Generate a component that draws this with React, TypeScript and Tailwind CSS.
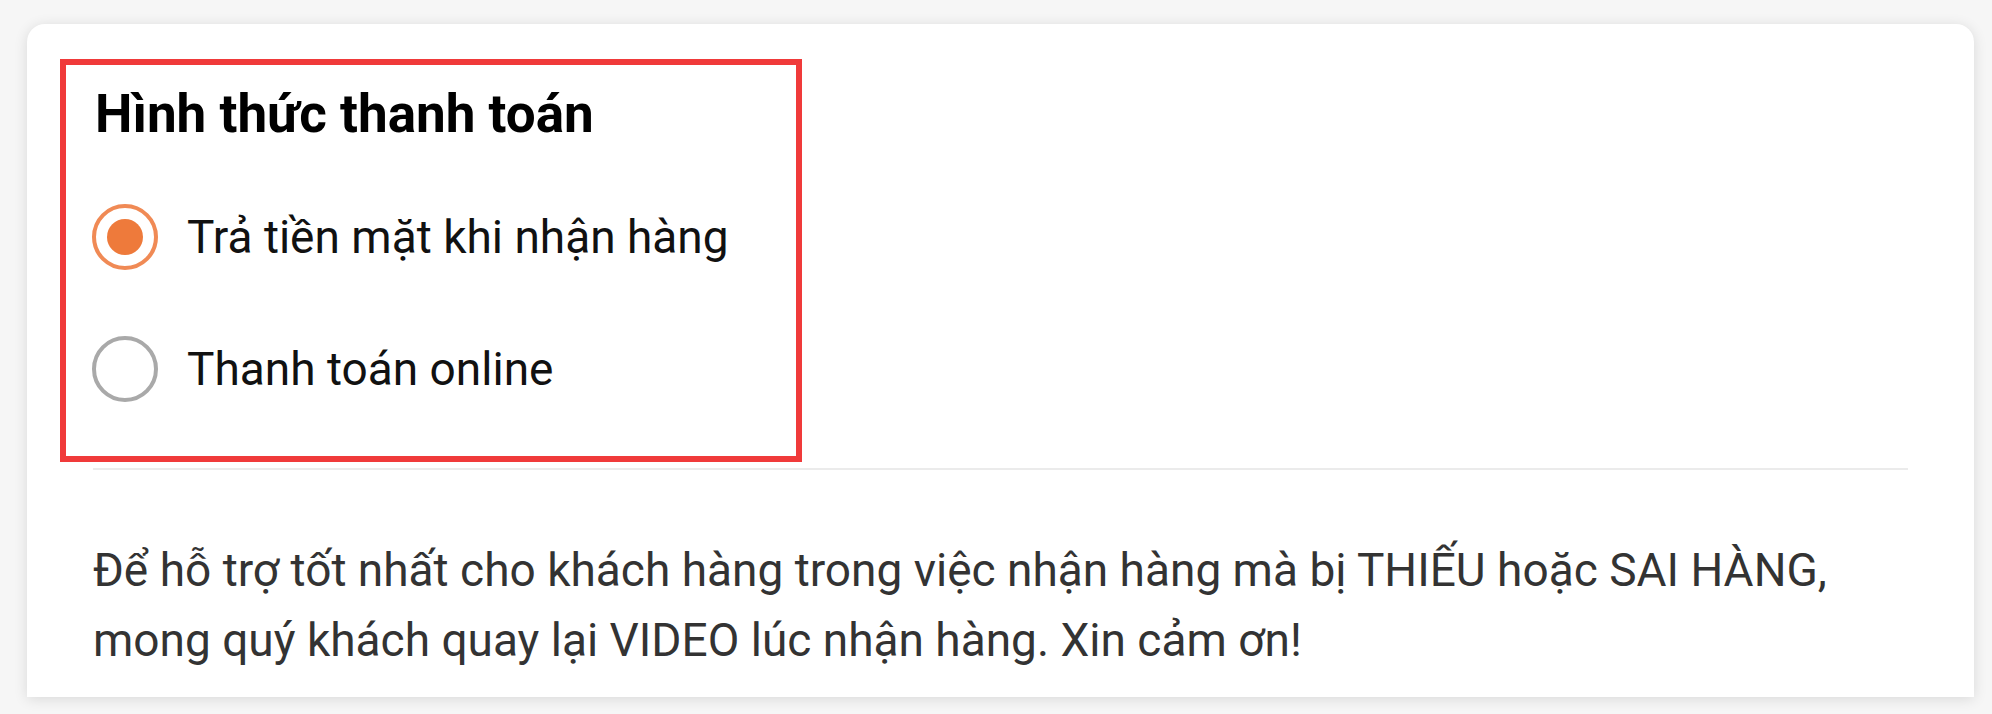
import React from "react";

function Radio({ checked }: { checked?: boolean }) {
  if (checked) {
    return (
      <span className="flex h-[66px] w-[66px] shrink-0 items-center justify-center rounded-full border-[4px] border-[#f08a55] bg-white">
        <span className="h-[36px] w-[36px] rounded-full bg-[#ee7a3b]" />
      </span>
    );
  }
  return <span className="h-[66px] w-[66px] shrink-0 rounded-full border-[4px] border-[#a9a9a9] bg-white" />;
}

export default function App() {
  const options = [
    { label: "Trả tiền mặt khi nhận hàng", checked: true },
    { label: "Thanh toán online", checked: false },
  ];

  return (
    <div className="h-[714px] w-full overflow-hidden bg-[#f6f6f6] pl-[27px] pr-[18px] pt-[24px] font-['Roboto',sans-serif]">
      <div className="h-[673px] rounded-t-[18px] bg-white pl-[33px] pr-[66px] pt-[35px] shadow-[0_2px_14px_rgba(0,0,0,0.12)]">
        <div className="w-[742px] border-[6px] border-[#f03a3a] pb-[54px] pl-[26px] pt-[19px]">
          <h2 className="ml-[3px] text-[53px] leading-[60px] font-bold text-black">Hình thức thanh toán</h2>
          <div className="mt-[60px] flex flex-col gap-[66px]">
            {options.map((o) => (
              <label key={o.label} className="flex items-center gap-[29px]">
                <Radio checked={o.checked} />
                <span className="text-[46px] leading-[56px] text-[#111]">{o.label}</span>
              </label>
            ))}
          </div>
        </div>
        <div className="ml-[33px] mt-[6px] h-[2px] bg-[#ebebeb]" />
        <p className="ml-[33px] mt-[65px] text-[46px] leading-[70px] text-[#333]">
          Để hỗ trợ tốt nhất cho khách hàng trong việc nhận hàng mà bị THIẾU hoặc SAI HÀNG,
          <br />
          mong quý khách quay lại VIDEO lúc nhận hàng. Xin cảm ơn!
        </p>
      </div>
    </div>
  );
}
